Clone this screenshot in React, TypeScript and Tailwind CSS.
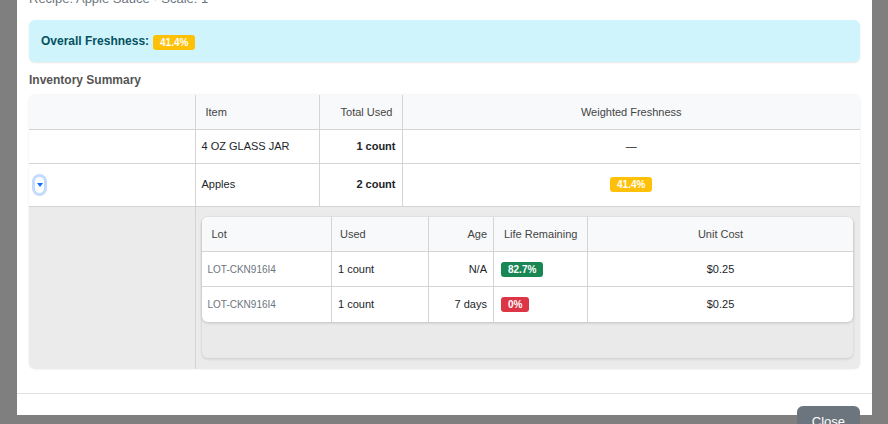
import React from 'react';

type Lot = {
  lot: string;
  used: string;
  age: string;
  life: string;
  lifeColor: string;
  cost: string;
};

const lots: Lot[] = [
  { lot: 'LOT-CKN916I4', used: '1 count', age: 'N/A', life: '82.7%', lifeColor: 'bg-[#198754]', cost: '$0.25' },
  { lot: 'LOT-CKN916I4', used: '1 count', age: '7 days', life: '0%', lifeColor: 'bg-[#dc3545]', cost: '$0.25' },
];

function Badge({ color, children }: { color: string; children: React.ReactNode }) {
  return (
    <span
      className={`inline-block rounded-[3px] px-[7px] py-[2px] text-[10px] font-bold leading-[11px] text-white ${color}`}
    >
      {children}
    </span>
  );
}

function LotTable() {
  const line = 'border-r border-[#d4d4d4]';
  return (
    <div className="rounded-md bg-white shadow-[0_1px_3px_rgba(0,0,0,0.18)] overflow-hidden">
      <table className="w-full table-fixed border-collapse text-[11px] text-[#212529]">
        <colgroup>
          <col className="w-[130px]" />
          <col className="w-[97px]" />
          <col className="w-[65px]" />
          <col className="w-[94px]" />
          <col />
        </colgroup>
        <thead>
          <tr className="h-[35px] bg-[#f8f9fa] text-[#444] border-b border-[#d4d4d4]">
            <th className={`pl-[10px] text-left font-medium ${line}`}>Lot</th>
            <th className={`pl-[8px] text-left font-medium ${line}`}>Used</th>
            <th className={`pr-[6px] text-right font-medium ${line}`}>Age</th>
            <th className={`pl-[10px] text-left font-medium ${line}`}>Life Remaining</th>
            <th className="text-center font-medium">Unit Cost</th>
          </tr>
        </thead>
        <tbody>
          {lots.map((l, i) => (
            <tr key={i} className={`h-[35px] ${i === 0 ? 'border-b border-[#d4d4d4]' : ''}`}>
              <td className={`pl-[6px] text-[10px] text-[#6c757d] ${line}`}>{l.lot}</td>
              <td className={`pl-[6px] ${line}`}>{l.used}</td>
              <td className={`pr-[6px] text-right ${line}`}>{l.age}</td>
              <td className={`pl-[7px] ${line}`}>
                <Badge color={l.lifeColor}>{l.life}</Badge>
              </td>
              <td className="text-center">{l.cost}</td>
            </tr>
          ))}
        </tbody>
      </table>
    </div>
  );
}

function ToggleButton() {
  return (
    <span className="inline-flex h-[22px] w-[15px] items-center justify-center rounded-full bg-[#c2dbfe]">
      <span className="flex h-[16px] w-[9px] items-center justify-center rounded-full bg-white">
        <svg width="6" height="4" viewBox="0 0 6 4">
          <path d="M0 0 L6 0 L3 4 Z" fill="#0d6efd" />
        </svg>
      </span>
    </span>
  );
}

function InventoryTable() {
  const cell = 'border-r border-[#d4d4d4]';
  return (
    <div className="rounded-md bg-white shadow-[0_0_2px_rgba(0,0,0,0.12)] overflow-hidden">
      <table className="w-full table-fixed border-collapse text-[11px] text-[#212529]">
        <colgroup>
          <col className="w-[166px]" />
          <col className="w-[124px]" />
          <col className="w-[83px]" />
          <col />
        </colgroup>
        <thead>
          <tr className="h-[34px] bg-[#f8f9fa] text-[#444] border-b border-[#d4d4d4]">
            <th className={cell} />
            <th className={`pl-[10px] text-left font-medium ${cell}`}>Item</th>
            <th className={`pr-[9px] text-right font-medium ${cell}`}>Total Used</th>
            <th className="text-center font-medium">Weighted Freshness</th>
          </tr>
        </thead>
        <tbody>
          <tr className="h-[34px] border-b border-[#d4d4d4]">
            <td className={cell} />
            <td className={`pl-[6px] ${cell}`}>4 OZ GLASS JAR</td>
            <td className={`pr-[6px] text-right font-bold ${cell}`}>1 count</td>
            <td className="text-center">—</td>
          </tr>
          <tr className="h-[43px] border-b border-[#d4d4d4]">
            <td className={`pl-[3px] ${cell}`}>
              <ToggleButton />
            </td>
            <td className={`pl-[6px] ${cell}`}>Apples</td>
            <td className={`pr-[6px] text-right font-bold ${cell}`}>2 count</td>
            <td className="text-center">
              <Badge color="bg-[#ffc107]">41.4%</Badge>
            </td>
          </tr>
          <tr className="bg-[#ebebeb]">
            <td className={cell} />
            <td colSpan={3} className="pl-[6px] pr-[7px] pt-[10px] pb-[11px] align-top">
              <div className="rounded-md bg-[#eaeaea] shadow-[0_1px_3px_rgba(0,0,0,0.15)] pb-[36px]">
                <LotTable />
              </div>
            </td>
          </tr>
        </tbody>
      </table>
    </div>
  );
}

export default function App() {
  return (
    <div
      className="h-[424px] w-[888px] overflow-hidden bg-[#7f7f7f]"
      style={{ fontFamily: '"Liberation Sans", Arial, sans-serif' }}
    >
      <div className="ml-[17px] h-full w-[855px] bg-white">
        <div className="px-[12px]">
          <div className="-mt-[9px] h-[16px] text-[13px] leading-[16px] text-[#6c757d]">
            Recipe: Apple Sauce · Scale: 1
          </div>
          <div className="mt-[13px] flex h-[42px] items-center rounded-md bg-[#cff4fc] px-[12px] shadow-[0_1px_2px_rgba(0,0,0,0.1)]">
            <span className="text-[12px] font-bold text-[#055160]">Overall Freshness:</span>
            <span className="ml-[4px]">
              <Badge color="bg-[#ffc107]">41.4%</Badge>
            </span>
          </div>
          <div className="mt-[11px] h-[14px] text-[12px] font-bold leading-[14px] text-[#555]">
            Inventory Summary
          </div>
          <div className="mt-[8px]">
            <InventoryTable />
          </div>
        </div>
        <div className="mt-[24px] flex justify-end border-t border-[#dee2e6] px-[12px] pt-[12px]">
          <button className="h-[32px] rounded-md bg-[#6c757d] px-[15px] text-[13px] text-white">Close</button>
        </div>
      </div>
    </div>
  );
}
